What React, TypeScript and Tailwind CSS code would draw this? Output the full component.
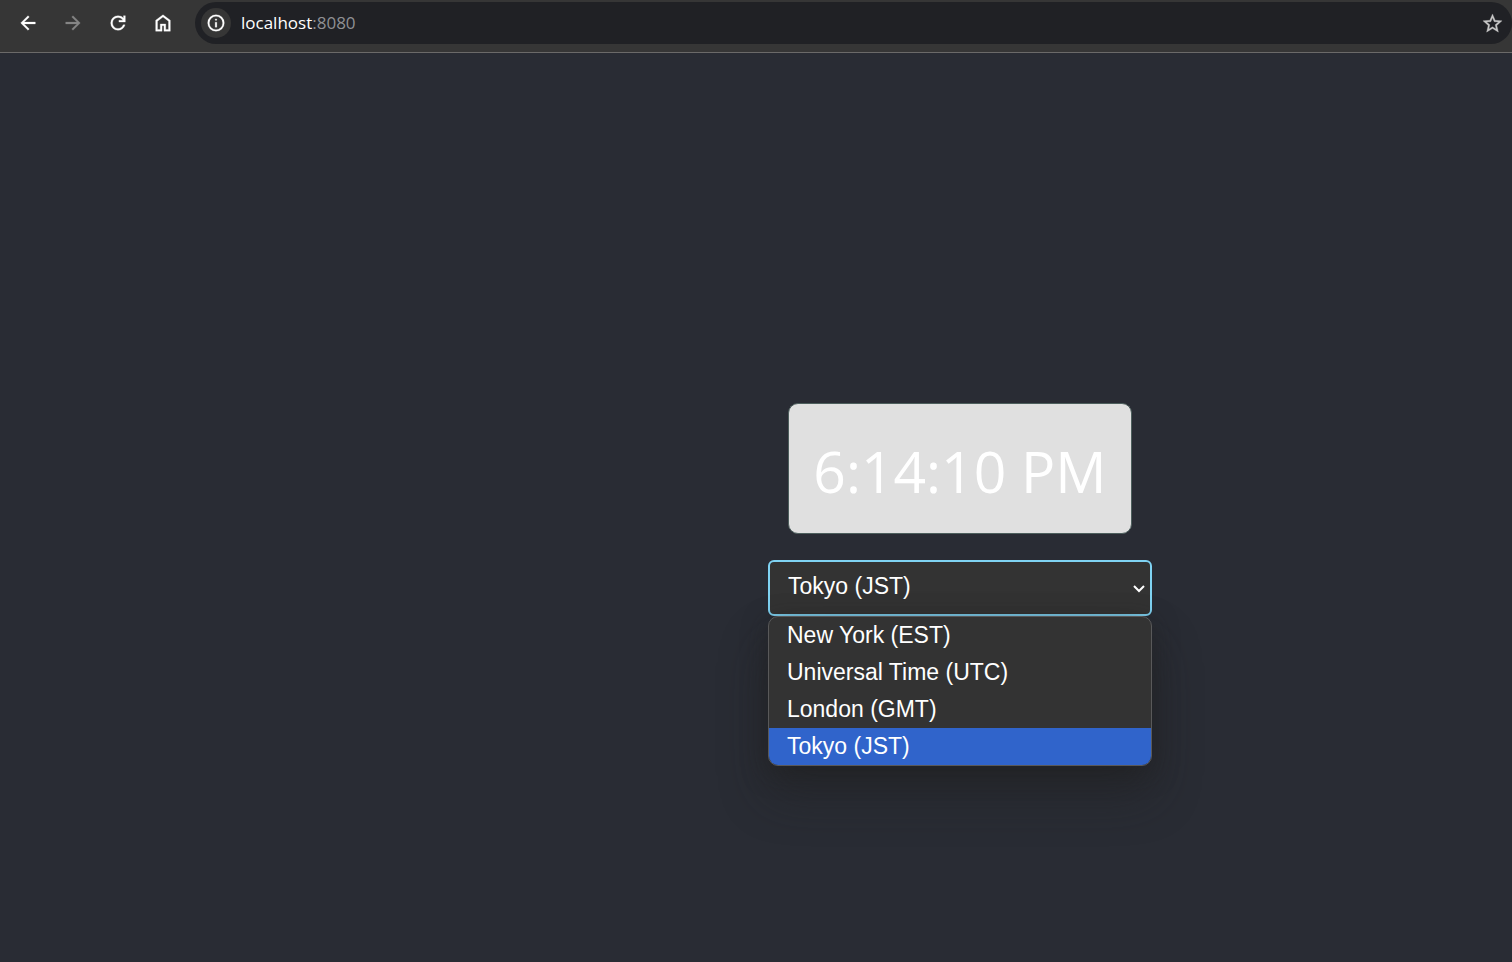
import { useState } from "react";

const ZONES = ["New York (EST)", "Universal Time (UTC)", "London (GMT)", "Tokyo (JST)"];

const ICONS = {
  back: "M20 11H7.83l5.59-5.59L12 4l-8 8 8 8 1.41-1.41L7.83 13H20v-2z",
  forward: "M12 4l-1.41 1.41L16.17 11H4v2h12.17l-5.58 5.59L12 20l8-8z",
  reload:
    "M12 20q-3.35 0-5.675-2.325T4 12q0-3.35 2.325-5.675T12 4q1.725 0 3.3.713T18 6.75V4h2v7h-7V9h4.2q-.8-1.4-2.187-2.2T12 6Q9.5 6 7.75 7.75T6 12t1.75 4.25T12 18q1.925 0 3.475-1.1T17.65 14h2.1q-.7 2.65-2.85 4.325T12 20Z",
  home: "M6 19h3v-6h6v6h3v-9l-6-4.5L6 10v9Zm-2 2V9l8-6 8 6v12h-7v-6h-2v6H4Z",
  info: "M11 17h2v-6h-2v6Zm1-8q.425 0 .713-.288T13 8t-.288-.713T12 7t-.713.288T11 8t.288.713T12 9Zm0 13a10 10 0 1 1 0-20 10 10 0 0 1 0 20Zm0-2a8 8 0 1 0 0-16 8 8 0 0 0 0 16Z",
  star: "M22 9.24l-7.19-.62L12 2 9.19 8.63 2 9.24l5.46 4.73L5.82 21 12 17.27 18.18 21l-1.63-7.03L22 9.24zM12 15.4l-3.76 2.27 1-4.28-3.32-2.88 4.38-.38L12 6.1l1.71 4.04 4.38.38-3.32 2.88 1 4.28L12 15.4z",
};

function Icon({ name, className }: { name: keyof typeof ICONS; className: string }) {
  return (
    <svg
      viewBox="0 0 24 24"
      fill="currentColor"
      stroke="currentColor"
      strokeWidth="0.3"
      className={className}
      aria-hidden="true"
    >
      <path d={ICONS[name]} />
    </svg>
  );
}

function NavButton({ name, label, disabled = false }: { name: keyof typeof ICONS; label: string; disabled?: boolean }) {
  return (
    <button
      type="button"
      aria-label={label}
      disabled={disabled}
      className="flex size-[45px] items-center justify-center text-white disabled:text-[#858585]"
    >
      <Icon name={name} className="size-[22px]" />
    </button>
  );
}

function BrowserBar() {
  return (
    <header className="flex h-[53px] shrink-0 items-start border-b border-[#6b6a69] bg-[#363636] pl-[5px]">
      <nav aria-label="Browser" className="flex">
        <NavButton name="back" label="Back" />
        <NavButton name="forward" label="Forward" disabled />
        <NavButton name="reload" label="Reload" />
        <NavButton name="home" label="Home" />
      </nav>
      <div className="mt-[2px] ml-[10px] flex h-[42px] flex-1 items-center rounded-full bg-[#202125] pr-2 pl-[6px]">
        <button
          type="button"
          aria-label="Site information"
          className="flex size-[30px] items-center justify-center rounded-full bg-[#363636] text-white"
        >
          <Icon name="info" className="size-5" />
        </button>
        <p className="ml-[10px] flex-1 font-['Open_Sans',sans-serif] text-[17px] leading-6 text-white">
          localhost<span className="text-[#8f9094]">:8080</span>
        </p>
        <button type="button" aria-label="Bookmark this tab" className="text-[#c7c7c7]">
          <Icon name="star" className="size-[23px]" />
        </button>
      </div>
    </header>
  );
}

function ZonePicker() {
  const [zone, setZone] = useState("Tokyo (JST)");
  return (
    <div className="relative w-96 font-['Liberation_Sans',Arial,sans-serif] text-[23px] text-white">
      <select
        aria-label="Time zone"
        value={zone}
        onChange={(e) => setZone(e.target.value)}
        className="block h-14 w-full appearance-none rounded-md border-2 border-[#7fd3f3] bg-[#333333] px-[18px] pb-1 outline-none"
      >
        {ZONES.map((z) => (
          <option key={z}>{z}</option>
        ))}
      </select>
      <svg
        viewBox="0 0 12 8"
        className="pointer-events-none absolute top-[25px] right-[7px] h-2 w-3"
        fill="none"
        stroke="currentColor"
        strokeWidth="2"
        aria-hidden="true"
      >
        <path d="M1 1l5 5 5-5" />
      </svg>
      <ul
        role="listbox"
        aria-label="Time zones"
        className="absolute top-full left-0 w-full overflow-hidden rounded-[10px] border border-[#59595a] bg-[#333333] shadow-[0_28px_48px_0_rgba(32,32,32,0.45),0_6px_24px_0_rgba(32,32,32,0.5)]"
      >
        {ZONES.map((z) => (
          <li
            key={z}
            role="option"
            aria-selected={z === zone}
            onClick={() => setZone(z)}
            className="h-[37px] px-[18px] leading-[37px] aria-selected:bg-[#3064cb]"
          >
            {z}
          </li>
        ))}
      </ul>
    </div>
  );
}

export default function App() {
  return (
    <div className="flex min-h-screen flex-col bg-[#292c34]">
      <BrowserBar />
      <main className="flex flex-1 flex-col items-center justify-center gap-[26px] pt-1 pl-[408px]">
        <time className="flex h-[131px] items-center rounded-[10px] border border-[#4d5f5d] bg-[#e0e0e0] px-6 pt-1 font-['Open_Sans',sans-serif] text-[57px] leading-[80px] whitespace-nowrap text-white">
          6:14:10 PM
        </time>
        <ZonePicker />
      </main>
    </div>
  );
}
